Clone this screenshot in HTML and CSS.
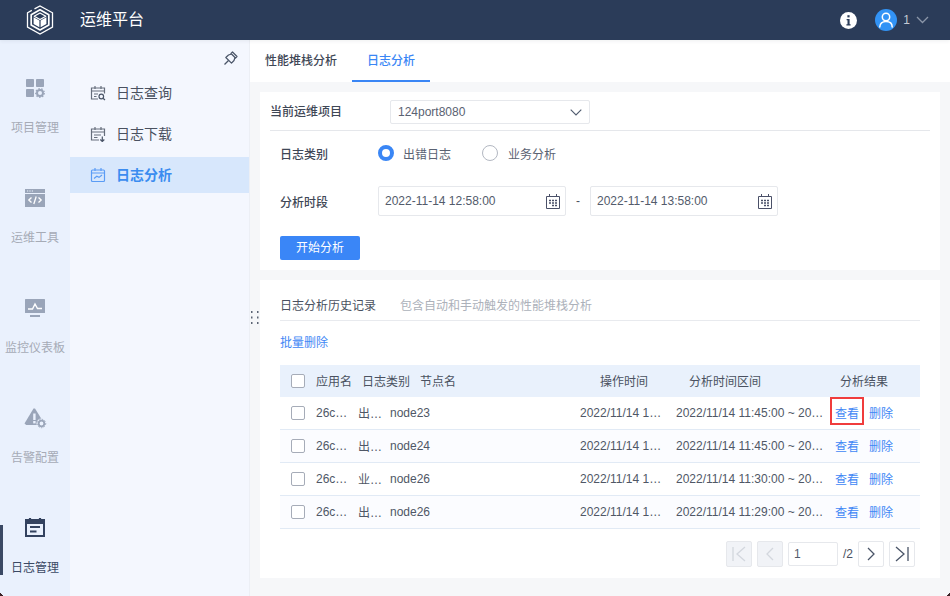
FILE: index.html
```html
<!DOCTYPE html>
<html lang="zh-CN">
<head>
<meta charset="utf-8">
<title>运维平台</title>
<link rel="stylesheet" href="styles.css">
</head>
<body>
<div class="app">
  <header class="topbar">
    <div class="brand">
      <svg class="logo" width="28" height="30" viewBox="0 0 28 30" fill="none">
        <path d="M8.500 3.900 14 1l12.500 6.800V22L14 29 1.500 22V7.800L5.800 5.400" stroke="#fff" stroke-width="1.300"/>
        <path d="M14 4.800 22.800 9.800V20L14 25 5.200 20V9.800Z" stroke="#fff" stroke-width="1.700" stroke-linejoin="round"/>
        <path d="M14 8 19.800 11.300 14 14.600 8.200 11.300Z" stroke="#fff" stroke-width="1.200" stroke-linejoin="round"/>
        <path d="M7.600 12.300 13.400 15.600V22.200L7.600 18.900Z M14.600 15.600 20.400 12.300V18.900L14.600 22.200Z" fill="#fff"/>
      </svg>
      <span class="brand-title">运维平台</span>
    </div>
    <div class="top-actions">
      <svg class="info" width="17" height="17" viewBox="0 0 17 17"><circle cx="8.500" cy="8.500" r="8.500" fill="#fff"/><rect x="7.400" y="3.200" width="2.200" height="2.200" fill="#2b3c59"/><path d="M6.600 7h3v5.200h1v1.300H6.400v-1.300h1.100V8.300h-.9Z" fill="#2b3c59"/></svg>
      <div class="avatar">
        <svg width="22" height="22" viewBox="0 0 22 22" fill="none" stroke="#fff" stroke-width="1.500"><circle cx="11" cy="8" r="3.700"/><path d="M4.800 18c0-3.700 2.600-5.600 6.200-5.600s6.200 1.900 6.200 5.600" stroke-linecap="round"/></svg>
      </div>
      <span class="user">1</span>
      <svg width="13" height="8" viewBox="0 0 13 8" fill="none" stroke="#8b96a8" stroke-width="1.300"><path d="M1 1l5.500 5.500L12 1"/></svg>
    </div>
  </header>
  <div class="body-row">
    <nav class="rail">
      <a class="rail-item">
        <svg width="24" height="24" viewBox="0 0 24 24" fill="#9aa5b9"><rect x="3" y="4" width="8" height="8" rx=".8"/><rect x="13" y="4" width="8" height="8" rx=".8"/><rect x="3" y="14" width="8" height="8" rx=".8"/><circle cx="17" cy="18" r="3" fill="none" stroke="#9aa5b9" stroke-width="2"/><circle cx="17" cy="18" r="4.300" fill="none" stroke="#9aa5b9" stroke-width="1.200" stroke-dasharray="1.500 1.500"/></svg>
        <span>项目管理</span>
      </a>
      <a class="rail-item">
        <svg width="24" height="24" viewBox="0 0 24 24"><rect x="2" y="4" width="20" height="18" fill="#9aa5b9"/><rect x="2" y="8" width="20" height="1" fill="#eaf1fd"/><path d="M4 6h1.200M6.400 6h1.200M8.800 6H10" stroke="#eaf1fd"/><path d="M8.500 12.500 5.800 15l2.700 2.500M15.500 12.500l2.700 2.500-2.700 2.500M13.200 11.500l-2.400 7.500" stroke="#fff" stroke-width="1.300" fill="none"/></svg>
        <span>运维工具</span>
      </a>
      <a class="rail-item">
        <svg width="24" height="24" viewBox="0 0 24 24"><rect x="2" y="4" width="20" height="14" rx=".5" fill="#9aa5b9"/><rect x="7" y="20" width="10" height="2" fill="#9aa5b9"/><path d="M5 14h4.500L12 9l2.500 4.500H19" stroke="#fff" stroke-width="1.400" fill="none"/></svg>
        <span>监控仪表板</span>
      </a>
      <a class="rail-item">
        <svg width="24" height="24" viewBox="0 0 24 24"><path d="M12 3.500 21 18l-1 2H3.200L1.500 18.500 10.500 3.500Z" fill="#9aa5b9"/><rect x="10.200" y="8.500" width="2.400" height="6.500" fill="#eaf1fd"/><rect x="10.200" y="16" width="2.400" height="2.400" fill="#eaf1fd"/><circle cx="18.500" cy="18.500" r="5" fill="#eaf1fd"/><circle cx="18.500" cy="18.500" r="2.800" fill="none" stroke="#9aa5b9" stroke-width="1.800"/><circle cx="18.500" cy="18.500" r="4.200" fill="none" stroke="#9aa5b9" stroke-width="1" stroke-dasharray="1.400 1.400"/></svg>
        <span>告警配置</span>
      </a>
      <a class="rail-item is-active">
        <svg width="24" height="24" viewBox="0 0 24 24"><path d="M7 3v3M17 3v3" stroke="#33425f" stroke-width="2.200"/><rect x="3" y="5" width="18" height="16" fill="none" stroke="#33425f" stroke-width="2"/><rect x="3" y="5" width="18" height="4" fill="#33425f"/><path d="M7 12h10M7 16.500h6.500" stroke="#33425f" stroke-width="2"/></svg>
        <span>日志管理</span>
      </a>
    </nav>
    <aside class="subnav">
      <div class="pin-row">
        <svg width="16" height="16" viewBox="0 0 16 16" fill="none" stroke="#4a5568" stroke-width="1.200" stroke-linejoin="round"><path d="M9.500 2 14 6.500 12.500 8 8 3.500Z"/><path d="M8.500 4 5.500 5 2.800 7.500 8.500 13.200 11 10.500 12 7.500"/><path d="M5.500 10.500 1.500 14.500"/></svg>
      </div>
      <a class="sub-item">
        <svg width="16" height="16" viewBox="0 0 16 16" fill="none" stroke="#666e7c" stroke-width="1.200"><path d="M8 14H1.500V3h13v5.500M1.500 6h13M5 1V4M11 1V4M4 9h4M4 11.500h2.500"/><circle cx="11.300" cy="11.500" r="2.300" stroke="#4a5568"/><path d="M13 13.200 15 15" stroke="#4a5568"/></svg>
        <span>日志查询</span>
      </a>
      <a class="sub-item">
        <svg width="16" height="16" viewBox="0 0 16 16" fill="none" stroke="#666e7c" stroke-width="1.200"><path d="M9 14H1.500V3h13v7M1.500 6h13M5 1V4M11 1V4M4 9h7M4 11.500h3.500"/><path d="M12.300 10.500V15.500M10.300 13.500 12.300 15.500l2-2" stroke="#4a5568"/></svg>
        <span>日志下载</span>
      </a>
      <a class="sub-item is-active">
        <svg width="16" height="16" viewBox="0 0 16 16" fill="none" stroke="#5a9cf5" stroke-width="1.200"><rect x="1.500" y="3" width="13" height="11.500" rx="1"/><path d="M1.500 6h13M5 1V4M11 1V4M4 11.500l2.800-2.300 2.200 1.200 3-2.400"/></svg>
        <span>日志分析</span>
      </a>
    </aside>
    <main class="main">
      <div class="tabs">
        <a class="tab">性能堆栈分析</a>
        <a class="tab is-active">日志分析</a>
      </div>
      <section class="card config">
        <div class="project-row">
          <label class="project-label">当前运维项目</label>
          <div class="select">
            <span>124port8080</span>
            <svg width="12" height="7" viewBox="0 0 12 7" fill="none" stroke="#4f5b6e" stroke-width="1.100"><path d="M.7.700 6 6l5.300-5.300"/></svg>
          </div>
        </div>
        <div class="form-row type-row">
          <label class="form-label">日志类别</label>
          <div class="radio-group">
            <span class="radio is-on"></span><span class="radio-text">出错日志</span>
            <span class="radio"></span><span class="radio-text">业务分析</span>
          </div>
        </div>
        <div class="form-row time-row">
          <label class="form-label">分析时段</label>
          <div class="date-input">
            <span>2022-11-14 12:58:00</span>
            <svg class="cal" width="14" height="15" viewBox="0 0 14 15" fill="none" stroke="#4a5068"><path d="M.5 2.500h13v12H.5ZM3.500 0v3M10.500 0v3"/><path d="M3 6.500h2M6 6.500h2M9 6.500h2M3 9h2M6 9h2M9 9h2M6 11.500h2M9 11.500h2" stroke-width="1.500"/></svg>
          </div>
          <span class="dash">-</span>
          <div class="date-input">
            <span>2022-11-14 13:58:00</span>
            <svg class="cal" width="14" height="15" viewBox="0 0 14 15" fill="none" stroke="#4a5068"><path d="M.5 2.500h13v12H.5ZM3.500 0v3M10.500 0v3"/><path d="M3 6.500h2M6 6.500h2M9 6.500h2M3 9h2M6 9h2M9 9h2M6 11.500h2M9 11.500h2" stroke-width="1.500"/></svg>
          </div>
        </div>
        <button class="primary">开始分析</button>
      </section>
      <section class="card history">
        <div class="hist-head">
          <span class="hist-title">日志分析历史记录</span>
          <span class="hist-sub">包含自动和手动触发的性能堆栈分析</span>
        </div>
        <a class="batch">批量删除</a>
        <div class="table">
          <div class="thead">
            <span class="check-cell"><i class="check"></i></span>
            <span class="th">应用名</span><span class="th">日志类别</span><span class="th">节点名</span><span class="th">操作时间</span><span class="th">分析时间区间</span><span class="th">分析结果</span>
          </div>
          <div class="trow">
            <span class="check-cell"><i class="check"></i></span>
            <span class="cell c-app">26c6f1a2b</span><span class="cell c-type">出错日志</span><span class="cell">node23</span><span class="cell c-op">2022/11/14 12:58:00</span><span class="cell c-range">2022/11/14 11:45:00 ~ 2022/11/14 12:45:00</span>
            <span class="actions"><a class="link">查看</a><a class="link">删除</a><i class="highlight"></i></span>
          </div>
          <div class="trow">
            <span class="check-cell"><i class="check"></i></span>
            <span class="cell c-app">26c6f1a2b</span><span class="cell c-type">出错日志</span><span class="cell">node24</span><span class="cell c-op">2022/11/14 12:58:00</span><span class="cell c-range">2022/11/14 11:45:00 ~ 2022/11/14 12:45:00</span>
            <span class="actions"><a class="link">查看</a><a class="link">删除</a></span>
          </div>
          <div class="trow">
            <span class="check-cell"><i class="check"></i></span>
            <span class="cell c-app">26c6f1a2b</span><span class="cell c-type">业务分析</span><span class="cell">node26</span><span class="cell c-op">2022/11/14 12:58:00</span><span class="cell c-range">2022/11/14 11:30:00 ~ 2022/11/14 12:30:00</span>
            <span class="actions"><a class="link">查看</a><a class="link">删除</a></span>
          </div>
          <div class="trow">
            <span class="check-cell"><i class="check"></i></span>
            <span class="cell c-app">26c6f1a2b</span><span class="cell c-type">出错日志</span><span class="cell">node26</span><span class="cell c-op">2022/11/14 12:58:00</span><span class="cell c-range">2022/11/14 11:29:00 ~ 2022/11/14 12:29:00</span>
            <span class="actions"><a class="link">查看</a><a class="link">删除</a></span>
          </div>
        </div>
        <div class="pager">
          <button class="page-btn is-disabled"><svg width="16" height="16" viewBox="0 0 16 16" fill="none" stroke="#d3d7de" stroke-width="1.300"><path d="M2 1v14M14 1 6 8l8 7"/></svg></button>
          <button class="page-btn is-disabled"><svg width="16" height="16" viewBox="0 0 16 16" fill="none" stroke="#d3d7de" stroke-width="1.300"><path d="M11 2 5 8l6 6"/></svg></button>
          <span class="page-input">1</span>
          <span class="page-total">/2</span>
          <button class="page-btn"><svg width="16" height="16" viewBox="0 0 16 16" fill="none" stroke="#4a5568" stroke-width="1.300"><path d="M5 2l6 6-6 6"/></svg></button>
          <button class="page-btn"><svg width="16" height="16" viewBox="0 0 16 16" fill="none" stroke="#4a5568" stroke-width="1.300"><path d="M2 1l8 7-8 7M14 1v14"/></svg></button>
        </div>
      </section>
      <svg class="handle" width="8" height="14" viewBox="0 0 8 14" fill="#5b6474"><rect x="0" y="0" width="1.500" height="2"/><rect x="6" y="0" width="1.500" height="2"/><rect x="0" y="5.500" width="1.500" height="2"/><rect x="6" y="5.500" width="1.500" height="2"/><rect x="0" y="11" width="1.500" height="2"/><rect x="6" y="11" width="1.500" height="2"/></svg>
    </main>
  </div>
</div>
</body>
</html>
```

FILE: styles.css
```css
* { box-sizing: border-box; }
html, body { margin: 0; height: 100%; overflow: hidden; }
body {
  font-family: "Liberation Sans", "Noto Sans CJK SC", sans-serif;
  font-size: 12px;
  color: #4a5160;
  background: #f6f7f9;
}
a { cursor: pointer; }
.app { width: 950px; height: 596px; display: flex; flex-direction: column; position: relative; }
.app::before, .app::after {
  content: "";
  position: absolute;
  bottom: 0;
  width: 3px; height: 3px;
  z-index: 3;
}
.app::before { left: 0; background: linear-gradient(45deg, #3a2226 50%, transparent 50%); }
.app::after { right: 0; background: linear-gradient(-45deg, #3a2226 50%, transparent 50%); }

/* top bar */
.topbar {
  flex: 0 0 40px;
  background: #2b3c59;
  display: flex;
  align-items: center;
  justify-content: space-between;
  padding-left: 26px;
  padding-right: 21px;
  position: relative;
  z-index: 2;
  box-shadow: 0 1px 4px rgba(40, 50, 70, .08);
}
.brand { display: flex; align-items: center; gap: 26px; }
.brand-title { color: #fff; font-size: 16px; line-height: 22px; }
.top-actions { display: flex; align-items: center; }
.info { margin-right: 18px; }
.avatar {
  width: 22px; height: 22px; border-radius: 50%;
  background: #3293f5;
  display: flex; margin-right: 6px;
}
.user { color: #c4cad4; font-size: 12px; margin-right: 6px; }

.body-row { flex: 1; display: flex; min-height: 0; }

/* icon rail */
.rail { flex: 0 0 70px; background: #eaf1fd; padding-top: 35px; }
.rail-item {
  height: 110px;
  display: flex; flex-direction: column; align-items: center;
  gap: 21px;
  color: #a6abb6;
  position: relative;
  white-space: nowrap;
}
.rail-item svg { display: block; flex: none; }
.rail-item span { line-height: 16px; }
.rail-item.is-active { color: #3b4964; }
.rail-item.is-active::before {
  content: "";
  position: absolute;
  left: 0; top: 10px;
  width: 3px; height: 50px;
  background: #3b4964;
}

/* secondary nav */
.subnav { flex: 0 0 180px; background: #f4f7fe; border-right: 1px solid #eceff5; }
.pin-row { height: 35px; display: flex; justify-content: flex-end; align-items: flex-end; padding: 0 10px 9px 0; }
.sub-item {
  height: 36px; margin-bottom: 5px;
  display: flex; align-items: center; gap: 10px;
  padding-left: 20px;
  font-size: 14px; color: #4a5160;
}
.sub-item svg { display: block; }
.sub-item span { padding-bottom: 2px; }
.sub-item.is-active { background: #d7e7fc; color: #3b8cf0; font-weight: 700; }

/* main column */
.main { flex: 1; min-width: 0; position: relative; }
.tabs { height: 42px; background: #fff; display: flex; padding-left: 15px; gap: 15px; font-weight: 500; }
.tab { line-height: 42px; color: #3f4756; }
.tab.is-active { color: #3a86f5; padding: 0 15px; height: 42px; border-bottom: 2px solid #3a86f5; }
.card { background: #fff; margin: 0 10px; }

/* config card */
.config { margin-top: 10px; height: 178px; padding: 8px 10px 0; }
.project-row { height: 31px; display: flex; border-bottom: 1px solid #e5e7eb; }
.project-label { width: 120px; line-height: 24px; font-weight: 500; color: #3f4756; }
.select {
  width: 200px; height: 24px;
  border: 1px solid #e6e8ec; border-radius: 2px;
  display: flex; align-items: center; justify-content: space-between;
  padding: 0 7px 0 7px; color: #5a6272;
}
.form-row { display: flex; align-items: center; padding-left: 10px; }
.form-label { width: 98px; font-weight: 500; color: #3f4756; }
.type-row { height: 44px; }
.radio-group { display: flex; align-items: center; }
.radio { width: 16px; height: 16px; border-radius: 50%; border: 1px solid #b3b8c2; background: #fff; }
.radio.is-on { border: 4.500px solid #3a86f5; }
.radio-text { margin-left: 9px; margin-right: 31px; width: 48px; color: #5a6272; }
.radio-text:last-child { margin-left: 10px; margin-right: 0; }
.time-row { margin-top: 11px; }
.date-input {
  width: 188px; height: 30px;
  border: 1px solid #e6e8ec; border-radius: 2px;
  display: flex; align-items: center; justify-content: space-between;
  padding: 0 5px 0 6px; color: #535b6b;
}
.cal { display: block; }
.dash { width: 24px; text-align: center; }
.primary {
  display: block;
  margin: 20px 0 0 10px;
  width: 80px; height: 24px;
  background: #3a86f7; color: #fff;
  border: 0; border-radius: 2px;
  font: inherit; padding: 0 0 3px;
}

/* history card */
.history { margin-top: 10px; height: 298px; padding: 0 20px; }
.hist-head { height: 41px; border-bottom: 1px solid #e8eaee; display: flex; align-items: flex-end; padding-bottom: 5px; }
.hist-title { width: 120px; color: #4a5160; line-height: 18px; }
.hist-sub { color: #acb1ba; line-height: 18px; }
.batch { display: block; margin-top: 13px; color: #3f87f5; line-height: 18px; }
.thead, .trow { display: grid; align-items: center; }
.table { margin-top: 13px; }
.thead {
  grid-template-columns: 36px 46px 58px 180px 89px 151px 80px;
  height: 32px; background: #e9f1fc; color: #4a5160;
}
.th { padding-bottom: 2px; }
.trow {
  grid-template-columns: 36px 42px 32px 190px 96px 154px 90px;
  height: 33px; border-bottom: 1px solid #e1eaf5; color: #4f5766;
}
.trow:nth-child(odd) { background: #fbfcff; }
.check-cell { padding-left: 11px; display: flex; }
.check { display: block; width: 14px; height: 14px; border: 1px solid #a6acb8; border-radius: 2px; background: #fff; }
.cell { white-space: nowrap; overflow: hidden; text-overflow: ellipsis; }
.c-app { padding-right: 9px; }
.c-type { padding-right: 8px; padding-bottom: 2px; }
.c-op { padding-right: 12px; }
.c-range { padding-right: 3px; }
.actions { display: flex; gap: 10px; padding: 0 0 2px 5px; position: relative; align-self: stretch; align-items: center; }
.link { color: #3f87f5; }
.highlight {
  position: absolute; left: 0; top: 0;
  width: 34px; height: 28px;
  border: 2px solid #f03c3c;
}

/* pagination */
.pager { margin-top: 12px; display: flex; justify-content: flex-end; align-items: center; gap: 5px; padding-right: 5px; }
.page-btn {
  width: 26px; height: 26px; padding: 0;
  border: 1px solid #e6e8ec; border-radius: 2px; background: #fff;
  display: flex; align-items: center; justify-content: center;
}
.page-btn.is-disabled { background: #f1f3f7; }
.page-input {
  width: 50px; height: 24px; line-height: 22px;
  border: 1px solid #e6e8ec; border-radius: 2px; padding-left: 5px; color: #535b6b;
}
.page-total { width: 10px; color: #4a5160; }
.handle { position: absolute; left: 1px; top: 271px; }
```
